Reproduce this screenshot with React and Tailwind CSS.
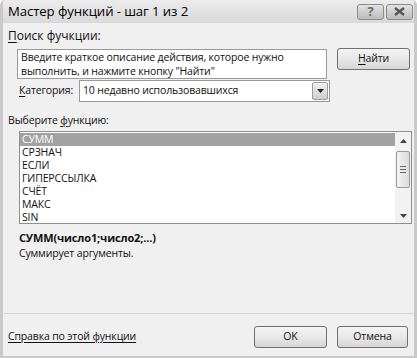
import React from "react";

const items = ["СУММ", "СРЗНАЧ", "ЕСЛИ", "ГИПЕРССЫЛКА", "СЧЁТ", "МАКС", "SIN"];

const btn =
  "flex items-center justify-center rounded-[3px] border border-[#707070] bg-gradient-to-b from-[#f4f4f4] via-[#e8e8e8] to-[#d6d6d6] text-[#111]";

const TitleButton = ({ children }) => (
  <div className="flex h-[16px] w-[27px] items-center justify-center rounded-[3px] border border-[#8c8c8c] bg-gradient-to-b from-[#e2e2e2] via-[#cfcfcf] to-[#bdbdbd] leading-none text-[#555]">
    {children}
  </div>
);

const App = () => {
  return (
    <div
      className="flex h-[358px] w-[417px] flex-col overflow-hidden rounded-t-[5px] border-x-[3px] border-b-[2px] border-[#c9c9c9] bg-[#f0f0f0] text-[10.5px] tracking-[-0.15px] text-[#111]"
      style={{ fontFamily: '"Open Sans", "Noto Sans", sans-serif' }}
    >
      {/* title bar */}
      <div className="flex h-[23px] shrink-0 items-center justify-between bg-gradient-to-b from-[#ececec] to-[#d9d9d9] pl-[5px] pr-[1px]">
        <span className="text-[13.2px] tracking-[-0.1px] text-[#000]">Мастер функций - шаг 1 из 2</span>
        <div className="flex gap-[2px]">
          <TitleButton>
            <span className="text-[13px] font-bold text-[#6a6a6a]">?</span>
          </TitleButton>
          <TitleButton>
            <svg width="13" height="9" viewBox="0 0 13 9">
              <path d="M2 1 L11 8 M11 1 L2 8" stroke="#555" strokeWidth="2.4" fill="none" />
            </svg>
          </TitleButton>
        </div>
      </div>

      <div className="flex flex-1 flex-col pl-[5px] pr-[4px]">
        <div className="mt-[5px] h-[15px] text-[12px] leading-[15px] tracking-normal">
          <span className="underline underline-offset-2">П</span>оиск фучкции:
        </div>

        <div className="mt-[6px] flex items-start pl-[9px]">
          <div className="h-[30px] w-[310px] border border-[#9a9a9a] bg-white px-[3px] pt-[0px] leading-[14px]">
            Введите краткое описание действия, которое нужно
            <br />
            выполнить, и нажмите кнопку "Найти"
          </div>
          <div className={`${btn} ml-[10px] mt-[-1px] h-[22px] w-[73px]`}>
            <span>
              <span className="underline underline-offset-2">Н</span>айти
            </span>
          </div>
        </div>

        <div className="mt-[1px] flex items-center pl-[11px]">
          <span className="w-[60px]">
            <span className="underline underline-offset-2">К</span>атегория:
          </span>
          <div className="flex h-[22px] w-[251px] items-center border border-[#9a9a9a] bg-white">
            <span className="flex-1 pl-[3px]">10 недавно использовавшихся</span>
            <div className="mr-[1px] flex h-[18px] w-[16px] items-center justify-center rounded-[2px] border border-[#9c9c9c] bg-gradient-to-b from-[#eeeeee] to-[#cfcfcf]">
              <svg width="7" height="4" viewBox="0 0 7 4">
                <path d="M0 0 H7 L3.5 4 Z" fill="#222" />
              </svg>
            </div>
          </div>
        </div>

        <div className="mt-[11px] h-[15px] leading-[15px]">
          Выберите <span className="underline underline-offset-2">ф</span>ункцию:
        </div>

        <div className="ml-[11px] mt-[3px] flex h-[93px] w-[393px] border border-[#8f8f8f] bg-white">
          <div className="flex-1 pt-[1px]">
            {items.map((it, i) => (
              <div
                key={it}
                className={`h-[13px] pl-[2px] leading-[13px] ${i === 0 ? "bg-[#a2a2a2] text-white" : ""}`}
              >
                {it}
              </div>
            ))}
          </div>
          <div className="flex w-[16px] flex-col items-center bg-[#f2f2f2]">
            <div className="flex h-[17px] items-center justify-center">
              <svg width="7" height="4" viewBox="0 0 7 4">
                <path d="M3.5 0 L7 4 H0 Z" fill="#444" />
              </svg>
            </div>
            <div className="mt-[2px] flex h-[37px] w-[14px] flex-col items-center justify-center gap-[2px] rounded-[2px] border border-[#9a9a9a] bg-gradient-to-r from-[#f4f4f4] to-[#dcdcdc]">
              <div className="h-[1px] w-[6px] bg-[#666]" />
              <div className="h-[1px] w-[6px] bg-[#666]" />
              <div className="h-[1px] w-[6px] bg-[#666]" />
            </div>
            <div className="flex flex-1 items-end justify-center pb-[5px]">
              <svg width="7" height="4" viewBox="0 0 7 4">
                <path d="M0 0 H7 L3.5 4 Z" fill="#444" />
              </svg>
            </div>
          </div>
        </div>

        <div className="mt-[6px] pl-[11px] text-[11px] font-bold leading-[15px]">СУММ(число1;число2;...)</div>
        <div className="mt-[1px] pl-[11px] leading-[15px]">Суммирует аргументы.</div>

        <div className="flex-1" />

        <div className="-mx-[5px] h-[1px] bg-[#d6d6d6]" />

        <div className="flex h-[42px] items-center pt-[3px]">
          <span className="flex-1 underline underline-offset-2">Справка по этой функции</span>
          <div className={`${btn} h-[22px] w-[73px]`}>OK</div>
          <div className={`${btn} ml-[10px] mr-[2px] h-[22px] w-[71px]`}>Отмена</div>
        </div>
      </div>
    </div>
  );
};

export default App;
